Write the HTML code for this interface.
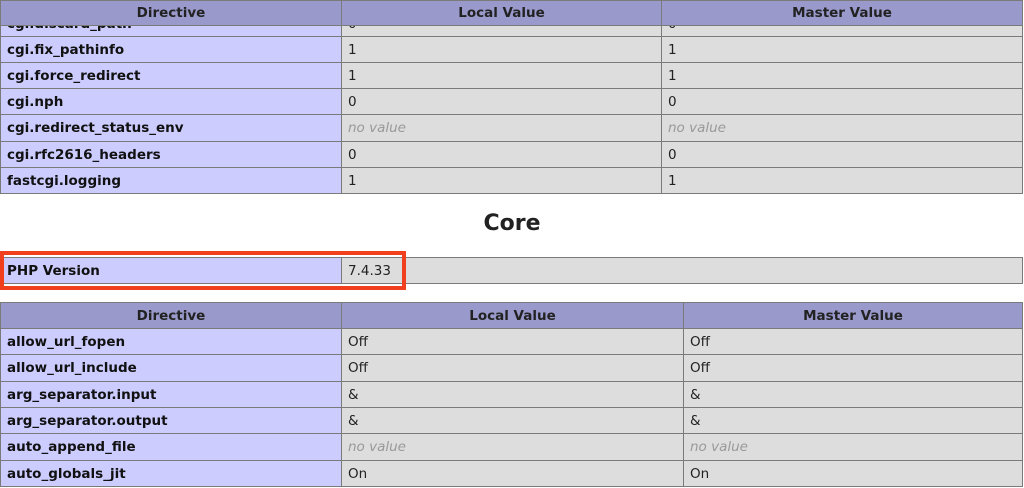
<!DOCTYPE html>
<html><head><meta charset="utf-8"><style>
body{margin:0;background:#fff;width:1024px;height:488px;overflow:hidden;position:relative;font-family:"DejaVu Sans","Liberation Sans",sans-serif;font-size:13.5px;color:#222}
.c{position:absolute;box-sizing:border-box;border:1px solid #7a7a7a;background:#ddd;padding-left:6px;display:flex;align-items:center;white-space:nowrap;overflow:hidden}
.e{background:#ccf;font-weight:bold;color:#111}
.h{background:#99c;font-weight:bold;justify-content:center;padding:0;color:#222}
.nv{color:#999;font-style:italic}
</style></head><body>
<!-- top table -->
<div class="c e" style="left:0;top:10px;width:342px;height:27px">cgi.discard_path</div>
<div class="c" style="left:341px;top:10px;width:321px;height:27px">0</div>
<div class="c" style="left:661px;top:10px;width:362px;height:27px">0</div>
<div class="c h" style="left:0;top:0;width:342px;height:26px">Directive</div>
<div class="c h" style="left:341px;top:0;width:321px;height:26px">Local Value</div>
<div class="c h" style="left:661px;top:0;width:362px;height:26px">Master Value</div>

<div class="c e" style="left:0;top:36px;width:342px;height:27px">cgi.fix_pathinfo</div>
<div class="c" style="left:341px;top:36px;width:321px;height:27px">1</div>
<div class="c" style="left:661px;top:36px;width:362px;height:27px">1</div>
<div class="c e" style="left:0;top:62px;width:342px;height:27px">cgi.force_redirect</div>
<div class="c" style="left:341px;top:62px;width:321px;height:27px">1</div>
<div class="c" style="left:661px;top:62px;width:362px;height:27px">1</div>
<div class="c e" style="left:0;top:88px;width:342px;height:27px">cgi.nph</div>
<div class="c" style="left:341px;top:88px;width:321px;height:27px">0</div>
<div class="c" style="left:661px;top:88px;width:362px;height:27px">0</div>
<div class="c e" style="left:0;top:114px;width:342px;height:28px">cgi.redirect_status_env</div>
<div class="c nv" style="left:341px;top:114px;width:321px;height:28px">no value</div>
<div class="c nv" style="left:661px;top:114px;width:362px;height:28px">no value</div>
<div class="c e" style="left:0;top:141px;width:342px;height:27px">cgi.rfc2616_headers</div>
<div class="c" style="left:341px;top:141px;width:321px;height:27px">0</div>
<div class="c" style="left:661px;top:141px;width:362px;height:27px">0</div>
<div class="c e" style="left:0;top:167px;width:342px;height:27px">fastcgi.logging</div>
<div class="c" style="left:341px;top:167px;width:321px;height:27px">1</div>
<div class="c" style="left:661px;top:167px;width:362px;height:27px">1</div>

<div style="position:absolute;left:0;width:1024px;top:211px;text-align:center;font-weight:bold;font-size:22px;color:#222">Core</div>

<div class="c e" style="left:0;top:257px;width:342px;height:27px">PHP Version</div>
<div class="c" style="left:341px;top:257px;width:682px;height:27px">7.4.33</div>
<div style="position:absolute;left:0;top:251px;width:406px;height:39px;box-sizing:border-box;border:4px solid #f0401e"></div>

<div class="c h" style="left:0;top:302px;width:342px;height:27px">Directive</div>
<div class="c h" style="left:341px;top:302px;width:343px;height:27px">Local Value</div>
<div class="c h" style="left:683px;top:302px;width:340px;height:27px">Master Value</div>
<div class="c e" style="left:0;top:328px;width:342px;height:27px">allow_url_fopen</div>
<div class="c" style="left:341px;top:328px;width:343px;height:27px">Off</div>
<div class="c" style="left:683px;top:328px;width:340px;height:27px">Off</div>
<div class="c e" style="left:0;top:354px;width:342px;height:28px">allow_url_include</div>
<div class="c" style="left:341px;top:354px;width:343px;height:28px">Off</div>
<div class="c" style="left:683px;top:354px;width:340px;height:28px">Off</div>
<div class="c e" style="left:0;top:381px;width:342px;height:27px">arg_separator.input</div>
<div class="c" style="left:341px;top:381px;width:343px;height:27px">&amp;</div>
<div class="c" style="left:683px;top:381px;width:340px;height:27px">&amp;</div>
<div class="c e" style="left:0;top:407px;width:342px;height:27px">arg_separator.output</div>
<div class="c" style="left:341px;top:407px;width:343px;height:27px">&amp;</div>
<div class="c" style="left:683px;top:407px;width:340px;height:27px">&amp;</div>
<div class="c e" style="left:0;top:433px;width:342px;height:28px">auto_append_file</div>
<div class="c nv" style="left:341px;top:433px;width:343px;height:28px">no value</div>
<div class="c nv" style="left:683px;top:433px;width:340px;height:28px">no value</div>
<div class="c e" style="left:0;top:460px;width:342px;height:27px">auto_globals_jit</div>
<div class="c" style="left:341px;top:460px;width:343px;height:27px">On</div>
<div class="c" style="left:683px;top:460px;width:340px;height:27px">On</div>
</body></html>
